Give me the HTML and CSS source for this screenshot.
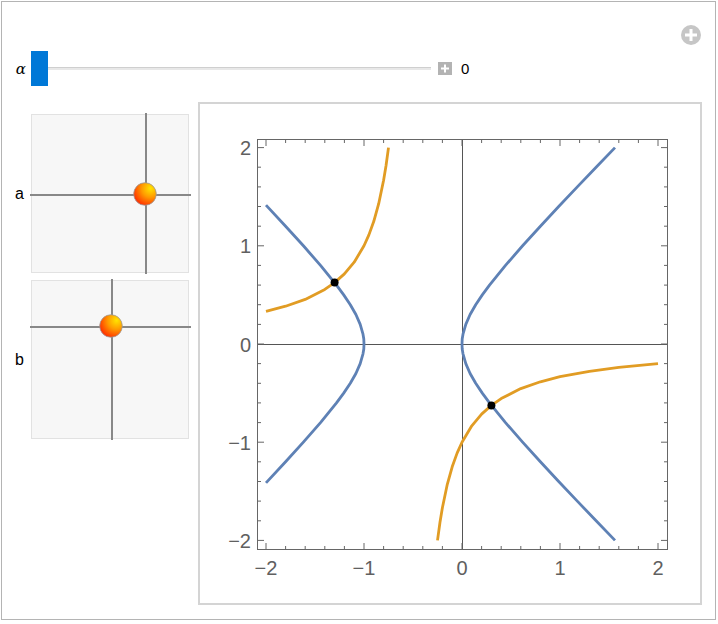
FILE: index.html
```html
<!DOCTYPE html>
<html>
<head>
<meta charset="utf-8">
<link rel="stylesheet" href="styles.css">
</head>
<body>
<div class="frame">
  <div class="add-btn">
    <svg width="22" height="22" viewBox="0 0 22 22"><circle cx="11" cy="11" r="10" fill="#c6c6c6"/><rect x="9.5" y="5" width="3" height="12" fill="#fff"/><rect x="5" y="9.5" width="12" height="3" fill="#fff"/></svg>
  </div>
  <div class="slider-row">
    <span class="lbl alpha">α</span>
    <div class="thumb"></div>
    <div class="track"></div>
    <span class="step"><svg width="14" height="13" viewBox="0 0 14 13"><rect width="14" height="13" fill="#b3b3b3"/><rect x="6" y="2.5" width="2" height="8" fill="#fff"/><rect x="3" y="5.5" width="8" height="2" fill="#fff"/></svg></span>
    <span class="val">0</span>
  </div>
  <div class="main">
    <div class="controls">
      <div class="pad-row">
        <span class="lbl">a</span>
        <div class="pad">
          <svg class="pad-svg" width="158" height="159" viewBox="0 0 158 159">
            <defs>
              <radialGradient id="ball" cx="0.72" cy="0.28" r="0.85" fx="0.75" fy="0.25">
                <stop offset="0" stop-color="#ffe400"/>
                <stop offset="0.45" stop-color="#ff9a00"/>
                <stop offset="1" stop-color="#ff2000"/>
              </radialGradient>
            </defs>
            <line x1="115" y1="-1" x2="115" y2="160" stroke="#888" stroke-width="2"/>
            <line x1="-1" y1="81" x2="160" y2="81" stroke="#888" stroke-width="2"/>
            <circle cx="114" cy="80" r="11.3" fill="url(#ball)" stroke="#9a9a9a" stroke-width="0.8"/>
          </svg>
        </div>
      </div>
      <div class="pad-row second">
        <span class="lbl">b</span>
        <div class="pad">
          <svg class="pad-svg" width="158" height="159" viewBox="0 0 158 159">
            <line x1="81" y1="-1" x2="81" y2="160" stroke="#888" stroke-width="2"/>
            <line x1="-1" y1="47" x2="160" y2="47" stroke="#888" stroke-width="2"/>
            <circle cx="80" cy="46" r="11.3" fill="url(#ball)" stroke="#9a9a9a" stroke-width="0.8"/>
          </svg>
        </div>
      </div>
    </div>
    <div class="plot-box">
      <svg class="plot" width="500" height="499" viewBox="200 104 500 499">
        <!-- axes -->
        <line x1="257" y1="344.5" x2="668" y2="344.5" stroke="#555" stroke-width="1"/>
        <line x1="462.5" y1="139" x2="462.5" y2="550" stroke="#555" stroke-width="1"/>
        <!-- curves -->
        <g fill="none" stroke-width="2.8" stroke-linejoin="round" stroke-linecap="butt">
          <polyline stroke="#5e81b5" points="615.0,147.6 596.1,167.2 577.3,186.9 558.7,206.5 540.4,226.2 522.6,245.8 505.5,265.4 489.5,285.1 482.3,294.9 475.7,304.7 470.1,314.5 465.8,324.4 463.0,334.2 462.2,339 462,344 462.2,349 463.0,353.8 465.8,363.6 470.1,373.5 475.7,383.3 482.3,393.1 489.5,402.9 505.5,422.6 522.6,442.2 540.4,461.8 558.7,481.5 577.3,501.1 596.1,520.8 615.0,540.4"/>
          <polyline stroke="#5e81b5" points="266,205.1 285.6,226.2 303.4,245.8 320.5,265.4 336.5,285.1 343.7,294.9 350.3,304.7 355.9,314.5 360.2,324.4 363.0,334.2 363.8,339 364,344 363.8,349 363.0,353.8 360.2,363.6 355.9,373.5 350.3,383.3 343.7,393.1 336.5,402.9 320.5,422.6 303.4,442.2 285.6,461.8 266,482.9"/>
          <polyline stroke="#e19c24" points="266,311.3 285.6,306.2 305.2,299.4 324.8,289.4 334.6,282.6 344.4,273.9 354.2,262.2 364,245.8 368.9,234.9 373.8,221.3 378.7,203.7 383.6,180.3 386.05,165.5 388.5,147.6"/>
          <polyline stroke="#e19c24" points="437.5,540.4 439.95,522.5 442.4,507.7 447.3,484.3 452.2,466.8 457.1,453.1 462,442.2 471.8,425.8 481.6,414.1 491.4,405.4 501.2,398.6 520.8,388.6 540.4,381.8 560,376.7 589.4,371.3 618.8,367.4 658,363.6"/>
        </g>
        <circle cx="334.6" cy="282.6" r="4" fill="#000"/>
        <circle cx="491.4" cy="405.4" r="4" fill="#000"/>
        <!-- frame -->
        <rect x="257.5" y="139.5" width="410" height="410" fill="none" stroke="#666" stroke-width="1"/>
        <!-- ticks -->
        <g stroke="#666" stroke-width="1">
          <path d="M266,550v-7M364,550v-7M462,550v-7M560,550v-7M658,550v-7M266,139v7M364,139v7M462,139v7M560,139v7M658,139v7"/>
          <path d="M285.6,550v-4M305.2,550v-4M324.8,550v-4M344.4,550v-4M383.6,550v-4M403.2,550v-4M422.8,550v-4M442.4,550v-4M481.6,550v-4M501.2,550v-4M520.8,550v-4M540.4,550v-4M579.6,550v-4M599.2,550v-4M618.8,550v-4M638.4,550v-4"/>
          <path d="M285.6,139v4M305.2,139v4M324.8,139v4M344.4,139v4M383.6,139v4M403.2,139v4M422.8,139v4M442.4,139v4M481.6,139v4M501.2,139v4M520.8,139v4M540.4,139v4M579.6,139v4M599.2,139v4M618.8,139v4M638.4,139v4"/>
          <path d="M257,147.6h7M257,245.8h7M257,344h7M257,442.2h7M257,540.4h7M668,147.6h-7M668,245.8h-7M668,344h-7M668,442.2h-7M668,540.4h-7"/>
          <path d="M257,167.2h4M257,186.9h4M257,206.5h4M257,226.2h4M257,265.4h4M257,285.1h4M257,304.7h4M257,324.4h4M257,363.6h4M257,383.3h4M257,402.9h4M257,422.6h4M257,461.8h4M257,481.5h4M257,501.1h4M257,520.8h4"/>
          <path d="M668,167.2h-4M668,186.9h-4M668,206.5h-4M668,226.2h-4M668,265.4h-4M668,285.1h-4M668,304.7h-4M668,324.4h-4M668,363.6h-4M668,383.3h-4M668,402.9h-4M668,422.6h-4M668,461.8h-4M668,481.5h-4M668,501.1h-4M668,520.8h-4"/>
        </g>
        <!-- labels -->
        <g class="tick-lbl" text-anchor="middle">
          <text x="266" y="575">−2</text>
          <text x="364" y="575">−1</text>
          <text x="462" y="575">0</text>
          <text x="560" y="575">1</text>
          <text x="658" y="575">2</text>
        </g>
        <g class="tick-lbl" text-anchor="end">
          <text x="251" y="155">2</text>
          <text x="251" y="253.3">1</text>
          <text x="251" y="351.5">0</text>
          <text x="251" y="449.7">−1</text>
          <text x="251" y="548">−2</text>
        </g>
      </svg>
    </div>
  </div>
</div>
</body>
</html>
```
FILE: styles.css
```css
html, body {
  margin: 0;
  padding: 0;
  background: #fff;
}
body {
  font-family: "Liberation Sans", Arial, sans-serif;
  color: #000;
}
.frame {
  position: relative;
  box-sizing: border-box;
  margin: 1px 0 0 1px;
  width: 715px;
  height: 619px;
  border: 1px solid #b4b4b4;
  background: #fff;
}
.add-btn {
  position: absolute;
  left: 678px;
  top: 22px;
  width: 22px;
  height: 22px;
}
.add-btn svg { display: block; }
.slider-row {
  display: flex;
  align-items: center;
  margin-top: 49px;
  height: 35px;
}
.lbl {
  width: 29px;
  box-sizing: border-box;
  padding-right: 7px;
  text-align: right;
  font-size: 16px;
  flex: none;
}
.alpha {
  font-family: "DejaVu Serif", "Liberation Serif", serif;
  font-style: italic;
  font-size: 15px;
  padding-right: 5px;
}
.thumb {
  width: 17px;
  height: 35px;
  background: #0078d7;
  flex: none;
}
.track {
  width: 383px;
  height: 3px;
  box-sizing: border-box;
  border-top: 1px solid #cfcfcf;
  background: #e8e8e8;
  flex: none;
}
.step {
  margin-left: 7px;
  width: 14px;
  height: 13px;
  flex: none;
}
.step svg { display: block; }
.val {
  margin-left: 9px;
  font-size: 15px;
}
.main {
  display: flex;
  align-items: flex-start;
  margin-top: 16px;
}
.controls {
  display: flex;
  flex-direction: column;
  margin-top: 12px;
  width: 187px;
  flex: none;
}
.pad-row {
  display: flex;
  align-items: center;
}
.pad-row.second {
  margin-top: 7px;
}
.pad {
  position: relative;
  box-sizing: border-box;
  width: 158px;
  height: 159px;
  background: #f7f7f7;
  border: 1px solid #e2e2e2;
  flex: none;
}
.pad-svg {
  position: absolute;
  left: -1px;
  top: -1px;
  overflow: visible;
}
.plot-box {
  box-sizing: border-box;
  margin-left: 9px;
  width: 504px;
  height: 503px;
  border: 2px solid #d4d4d4;
  background: #fff;
  flex: none;
}
.plot {
  display: block;
}
.tick-lbl {
  font-family: "Liberation Sans", Arial, sans-serif;
  font-size: 20px;
  fill: #606060;
}
```
